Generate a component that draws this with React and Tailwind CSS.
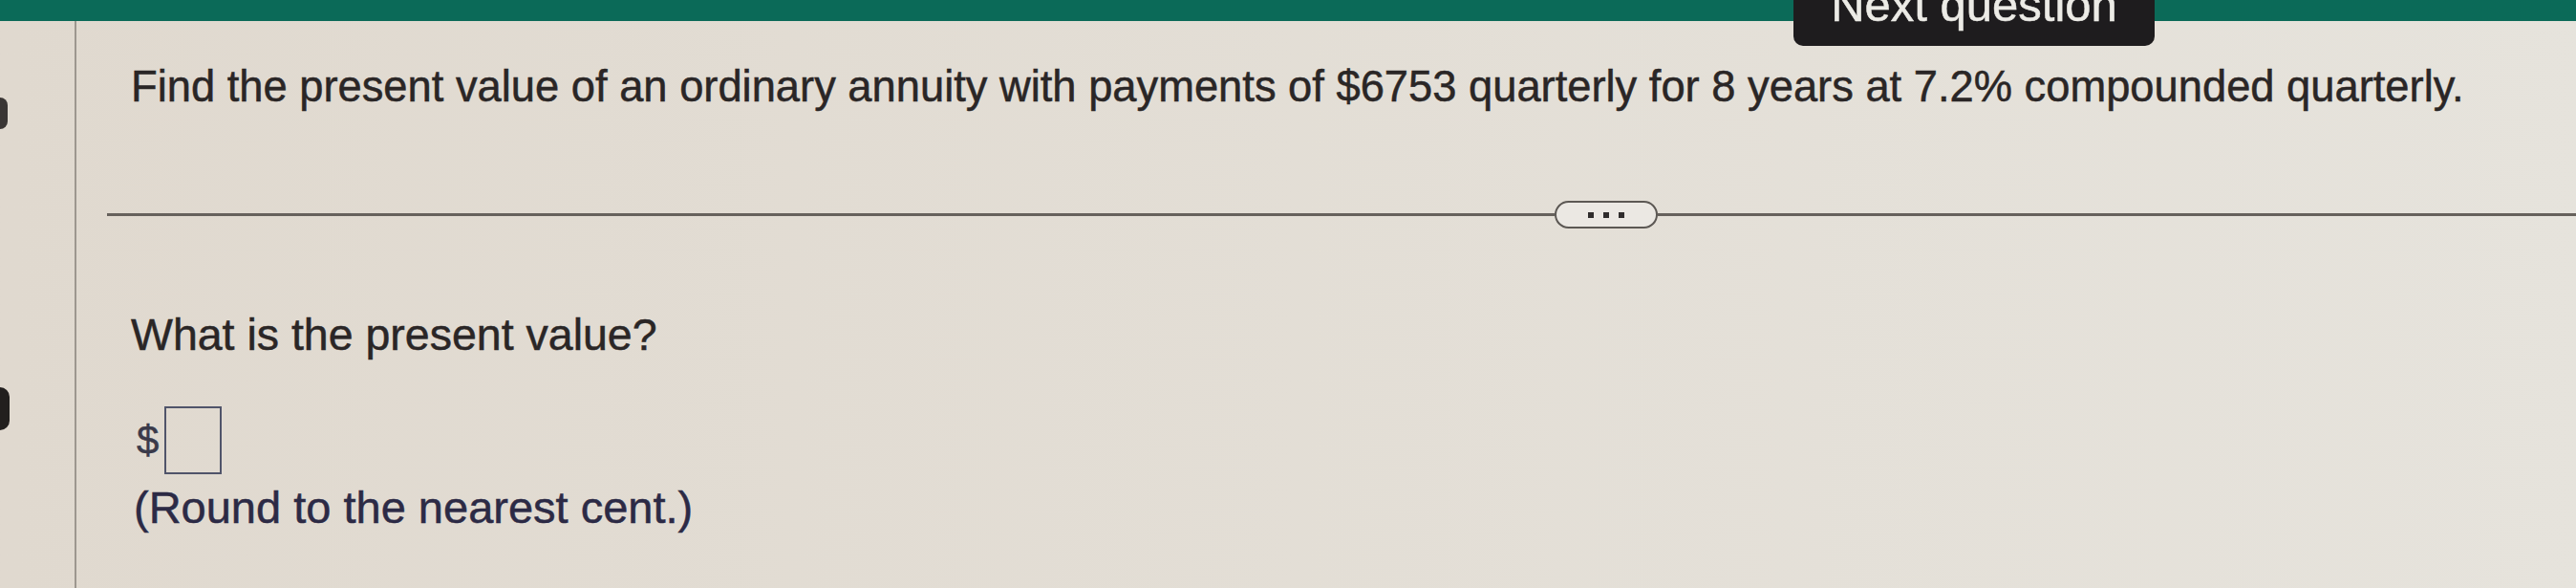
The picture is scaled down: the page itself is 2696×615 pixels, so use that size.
const Divider = () => (
    <div className="flex items-center mt-[93px] -ml-[25px] h-[29px]">
        <div className="w-[1515px] h-[3px] bg-[#66615c]" />
        <div className="w-[108px] h-[29px] rounded-full border-2 border-[#5c5854] bg-[#ebe8e3] flex items-center justify-center gap-[10px]">
            <span className="w-[6px] h-[6px] bg-[#2f2c2c]" />
            <span className="w-[6px] h-[6px] bg-[#2f2c2c]" />
            <span className="w-[6px] h-[6px] bg-[#2f2c2c]" />
        </div>
        <div className="flex-1 h-[3px] bg-[#66615c]" />
    </div>
);

const App = () => {
    return (
        <div className="w-[2696px] h-[615px] overflow-hidden bg-linear-to-r from-[#e0d9cf] to-[#e6e3dc] font-['Liberation_Sans',Arial,sans-serif] [-webkit-text-stroke:0.5px_currentcolor]">
            {/* top bar with the cut-off button */}
            <div className="h-[22px] bg-[#0b6a58] flex justify-end items-start pr-[441px]">
                <button className="w-[378px] h-[48px] bg-[#1e1c1e] rounded-b-[10px] shrink-0 relative z-10 overflow-hidden flex justify-center">
                    <span className="block text-[49px] leading-none -mt-[19px] text-[#ecebe6]">
                        Next question
                    </span>
                </button>
            </div>

            <div className="flex h-[593px]">
                {/* left rail */}
                <div className="w-[80px] shrink-0 border-r-2 border-[#9d978f] flex flex-col">
                    <div className="mt-[80px] w-[8px] h-[33px] rounded-r-full bg-[#3a3634]" />
                    <div className="mt-[270px] w-[10px] h-[45px] rounded-r-full bg-[#221f1e]" />
                </div>

                <div className="flex-1 pl-[57px]">
                    <p className="mt-[43px] text-[45.3px] leading-[52px] text-[#2a2626] whitespace-nowrap">
                        Find the present value of an ordinary annuity with payments of $6753 quarterly for 8 years at 7.2% compounded quarterly.
                    </p>

                    <Divider />

                    <p className="mt-[84px] text-[46.5px] leading-[54px] text-[#2a2626]">
                        What is the present value?
                    </p>

                    <div className="mt-[48px] flex items-center h-[71px]">
                        <span className="ml-[6px] text-[42px] leading-none text-[#3a3a4a]">$</span>
                        <div className="ml-[6px] w-[60px] h-[71px] border-2 border-[#50546a]" />
                    </div>

                    <p className="mt-[9px] ml-[3px] text-[47px] leading-[52px] text-[#2c2a45]">
                        (Round to the nearest cent.)
                    </p>
                </div>
            </div>
        </div>
    );
};

export default App;
